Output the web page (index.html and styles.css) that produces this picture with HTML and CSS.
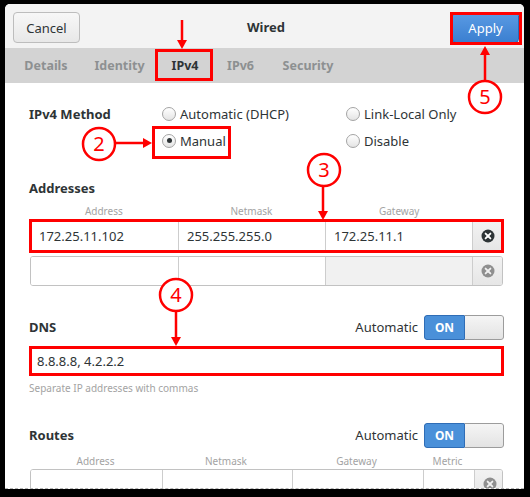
FILE: index.html
```html
<!DOCTYPE html>
<html>
<head>
<meta charset="utf-8">
<link rel="stylesheet" href="styles.css">
</head>
<body>
<div class="window">
  <div class="header">
    <button class="btn">Cancel</button>
    <div class="title">Wired</div>
    <button class="btn btn-blue">Apply</button>
  </div>
  <div class="tabs">
    <div class="tab t-details">Details</div>
    <div class="tab t-identity">Identity</div>
    <div class="tab t-ipv4 active">IPv4</div>
    <div class="tab t-ipv6">IPv6</div>
    <div class="tab t-security">Security</div>
  </div>
  <div class="content">
    <div class="method">
      <div class="label">IPv4 Method</div>
      <div class="opt"><span class="radio"></span>Automatic (DHCP)</div>
      <div class="opt"><span class="radio"></span>Link-Local Only</div>
      <div></div>
      <div class="opt"><span class="radio checked"></span>Manual</div>
      <div class="opt"><span class="radio"></span>Disable</div>
    </div>

    <div class="heading addr-heading">Addresses</div>
    <div class="addr-cols colhead">
      <div>Address</div><div>Netmask</div><div>Gateway</div><div></div>
    </div>
    <div class="addr-cols row">
      <div class="cell">172.25.11.102</div>
      <div class="cell">255.255.255.0</div>
      <div class="cell">172.25.11.1</div>
      <div class="cell del"><svg class="xicon" viewBox="0 0 14 14"><circle cx="7" cy="7" r="6.5" fill="#2e3436"/><path d="M4.6 4.6 L9.4 9.4 M9.4 4.6 L4.6 9.4" stroke="#fff" stroke-width="1.9" stroke-linecap="round"/></svg></div>
    </div>
    <div class="addr-cols row row2">
      <div class="cell"></div>
      <div class="cell"></div>
      <div class="cell dim"></div>
      <div class="cell del"><svg class="xicon" viewBox="0 0 14 14"><circle cx="7" cy="7" r="6.5" fill="#8f8f8f"/><path d="M4.6 4.6 L9.4 9.4 M9.4 4.6 L4.6 9.4" stroke="#f0f0f0" stroke-width="1.9" stroke-linecap="round"/></svg></div>
    </div>

    <div class="sect dns-sect">
      <div class="heading">DNS</div>
      <div class="auto">Automatic<div class="switch"><div class="on">ON</div><div class="knob"></div></div></div>
    </div>
    <div class="entry">8.8.8.8, 4.2.2.2</div>
    <div class="hint">Separate IP addresses with commas</div>

    <div class="sect routes-sect">
      <div class="heading">Routes</div>
      <div class="auto">Automatic<div class="switch"><div class="on">ON</div><div class="knob"></div></div></div>
    </div>
    <div class="route-cols colhead route-head">
      <div>Address</div><div>Netmask</div><div>Gateway</div><div>Metric</div><div></div>
    </div>
    <div class="route-cols row route-row">
      <div class="cell"></div>
      <div class="cell"></div>
      <div class="cell"></div>
      <div class="cell"></div>
      <div class="cell del"><svg class="xicon" viewBox="0 0 14 14"><circle cx="7" cy="7" r="6.5" fill="#8f8f8f"/><path d="M4.6 4.6 L9.4 9.4 M9.4 4.6 L4.6 9.4" stroke="#f0f0f0" stroke-width="1.9" stroke-linecap="round"/></svg></div>
    </div>
  </div>
</div>

<svg class="annot" width="530" height="497" viewBox="0 0 530 497">
  <g fill="none" stroke="#ff0000" stroke-width="3">
    <rect x="156.5" y="50.5" width="55" height="29"/>
    <rect x="451.5" y="13.5" width="69" height="30"/>
    <rect x="153.5" y="127.5" width="76" height="30"/>
    <rect x="30.5" y="220.5" width="472" height="31"/>
    <rect x="30.5" y="347.5" width="472" height="27"/>
  </g>
  <g fill="#fff" stroke="#ff0000" stroke-width="2.5">
    <circle cx="99" cy="144" r="16"/>
    <circle cx="324" cy="170" r="16"/>
    <circle cx="176" cy="295" r="16"/>
    <circle cx="485" cy="97" r="16"/>
  </g>
  <g stroke="#ff0000" stroke-width="2.5">
    <line x1="182" y1="20" x2="182" y2="41"/>
    <line x1="485" y1="81" x2="485" y2="54"/>
    <line x1="115" y1="143" x2="144" y2="143"/>
    <line x1="323" y1="186" x2="323" y2="212"/>
    <line x1="176" y1="311" x2="176" y2="338"/>
  </g>
  <g fill="#ff0000">
    <polygon points="177,40 187,40 182,49"/>
    <polygon points="480,55 490,55 485,46"/>
    <polygon points="143,138 143,148 152,143"/>
    <polygon points="318,211 328,211 323,220"/>
    <polygon points="171,337 181,337 176,346"/>
  </g>
  <g class="num" fill="#ff0000" text-anchor="middle">
    <text x="99" y="151">2</text>
    <text x="324" y="177">3</text>
    <text x="176" y="302">4</text>
    <text x="485" y="104">5</text>
  </g>
</svg>
</body>
</html>
```

FILE: styles.css
```css
html, body {
  margin: 0;
  padding: 0;
}
body {
  width: 530px;
  height: 497px;
  background: #000;
  overflow: hidden;
  position: relative;
  font-family: "Noto Sans", "DejaVu Sans", sans-serif;
  font-size: 13px;
  color: #2e3436;
}
.window {
  margin: 4px 6px 0 5px;
  height: 485px;
  box-sizing: border-box;
  background: #fff;
  border-radius: 5px 5px 0 0;
  border-bottom: 1px dashed #b4b4b4;
  overflow: hidden;
  display: flex;
  flex-direction: column;
}
.header {
  height: 44px;
  flex: none;
  box-sizing: border-box;
  background: #f3f3f3;
  padding: 8px 5px 0 8px;
  display: grid;
  grid-template-columns: 67px 1fr 67px;
  align-items: start;
}
.btn {
  height: 31px;
  width: 67px;
  margin: 0;
  padding: 0;
  font-family: inherit;
  font-size: 13px;
  color: #2e3436;
  background: linear-gradient(#f7f7f7, #e8e8e8);
  border: 1px solid #bdbdbd;
  border-radius: 4px;
}
.btn-blue {
  color: #fff;
  background: linear-gradient(#5a9be4, #3b7fd0);
  border-color: #2b67b3;
}
.title {
  text-align: center;
  font-weight: 700;
  font-size: 13px;
  line-height: 31px;
}
.tabs {
  height: 35px;
  flex: none;
  background: #d3d3d3;
  display: flex;
  padding-left: 5.5px;
}
.tab {
  line-height: 35px;
  font-weight: 700;
  font-size: 12.5px;
  text-align: center;
  color: #8d9091;
}
.t-details { width: 71px; }
.t-identity { width: 76px; }
.t-ipv4 { width: 55px; }
.t-ipv6 { width: 56px; }
.t-security { width: 79px; }
.tab.active {
  color: #2e3436;
}
.content {
  padding: 17px 20px 0 24px;
}
.method {
  display: grid;
  grid-template-columns: 133px 184px 1fr;
  grid-auto-rows: 27px;
  align-items: center;
}
.label, .heading {
  font-weight: 700;
}
.opt {
  display: flex;
  align-items: center;
  gap: 4px;
}
.radio {
  width: 14px;
  height: 14px;
  box-sizing: border-box;
  border: 1px solid #a4a4a4;
  border-radius: 50%;
  background: linear-gradient(#ffffff, #e4e4e4);
  display: flex;
  align-items: center;
  justify-content: center;
}
.radio.checked::after {
  content: "";
  width: 5px;
  height: 5px;
  border-radius: 50%;
  background: #2e3436;
}
.heading {
  line-height: 18px;
}
.addr-heading {
  margin-top: 25px;
}
.addr-cols {
  display: grid;
  grid-template-columns: 1fr 1fr 1fr 30px;
  margin-left: 1px;
  margin-right: 1px;
}
.route-cols {
  display: grid;
  grid-template-columns: 131px 130px 131px 51px 30px;
  margin-left: 1px;
  margin-right: 1px;
}
.colhead {
  font-size: 10px;
  line-height: 14px;
  color: #a3a3a3;
  text-align: center;
  margin-top: 7px;
}
.row {
  height: 30px;
  box-sizing: border-box;
  border: 1px solid #c2c2c2;
  border-radius: 3px;
  overflow: hidden;
  margin-top: 3px;
}
.row2 {
  margin-top: 5px;
}
.cell {
  line-height: 28px;
  padding-left: 8px;
  border-left: 1px solid #cdcdcd;
  background: #fff;
}
.cell:first-child {
  border-left: none;
}
.cell.dim {
  background: #f1f1f1;
}
.cell.del {
  padding: 0;
  background: linear-gradient(#f2f2f2, #e6e6e6);
  display: flex;
  align-items: center;
  justify-content: center;
}
.xicon {
  width: 14px;
  height: 14px;
}
.sect {
  height: 26px;
  display: flex;
  align-items: center;
  justify-content: space-between;
}
.dns-sect {
  margin-top: 28px;
}
.routes-sect {
  margin-top: 27px;
}
.auto {
  display: flex;
  align-items: center;
  gap: 6px;
}
.switch {
  width: 80px;
  height: 25px;
  display: flex;
  border-radius: 3px;
  overflow: hidden;
}
.on {
  width: 40px;
  box-sizing: border-box;
  background: #4a90d9;
  border: 1px solid #2f6db6;
  border-right: none;
  border-radius: 3px 0 0 3px;
  color: #fff;
  font-size: 12px;
  font-weight: 700;
  line-height: 23px;
  text-align: center;
}
.knob {
  flex: 1;
  box-sizing: border-box;
  background: linear-gradient(#f5f5f5, #e3e3e3);
  border: 1px solid #9c9c9c;
  border-left-color: #2f6db6;
  border-radius: 0 3px 3px 0;
}
.entry {
  margin-top: 6px;
  height: 30px;
  box-sizing: border-box;
  border: 1px solid #c2c2c2;
  border-radius: 3px;
  padding-left: 7px;
  line-height: 28px;
}
.hint {
  margin-top: 5px;
  font-size: 10px;
  line-height: 14px;
  color: #a3a3a3;
}
.route-head {
  margin-top: 6px;
}
.route-row {
  margin-top: 1px;
}
.annot {
  position: absolute;
  left: 0;
  top: 0;
  pointer-events: none;
}
.num {
  font-family: "Noto Sans", "DejaVu Sans", sans-serif;
  font-size: 20px;
}
```
